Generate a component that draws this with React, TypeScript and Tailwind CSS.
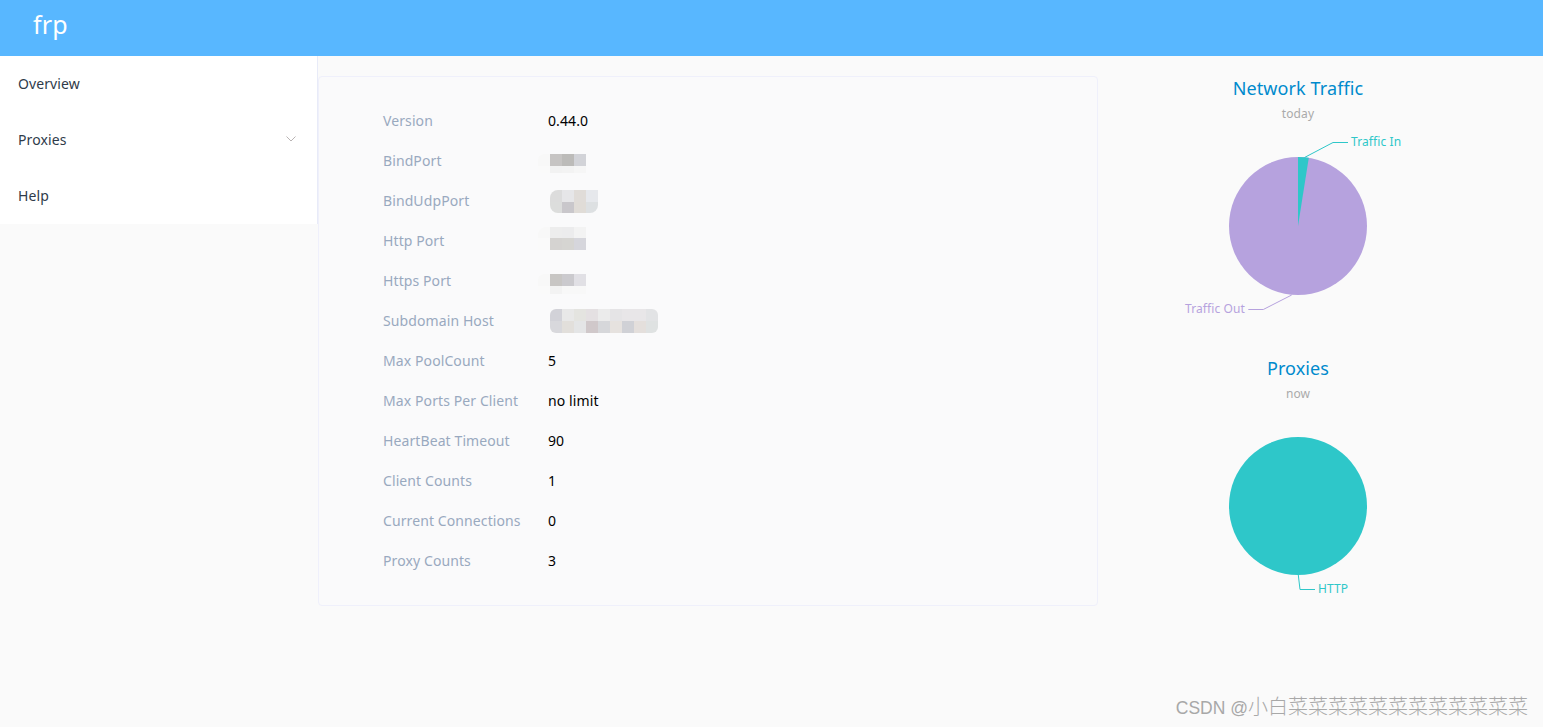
import React from 'react';

const font = "font-['Noto_Sans','Liberation_Sans',sans-serif]";

// pixelated values, each entry is a row of 12px cells
type Blur = { ml: string; mt: string; rounded: string; rows: { h: string; cells: string[] }[] };

const bindPort: Blur = {
  ml: 'ml-[-10px]',
  mt: 'mt-[5px]',
  rounded: 'rounded-l-md',
  rows: [
    { h: 'h-[12px]', cells: ['bg-[#f8f8f8]', 'bg-[#c6c4c3]', 'bg-[#bcbbb9]', 'bg-[#d2d3d8]'] },
    { h: 'h-[7px]', cells: ['bg-[#fafafa]', 'bg-[#f2f2f2]', 'bg-[#f3f3f3]', 'bg-[#f6f6f6]'] },
  ],
};

const bindUdp: Blur = {
  ml: 'ml-[2px]',
  mt: 'mt-0',
  rounded: 'rounded-l-lg rounded-br-lg',
  rows: [
    { h: 'h-[12px]', cells: ['bg-[#dcdcdc]', 'bg-[#e6e6e8]', 'bg-[#e0dcd8]', 'bg-[#e6e8ec]'] },
    { h: 'h-[11px]', cells: ['bg-[#dcdddc]', 'bg-[#c9c7cb]', 'bg-[#e0dcd7]', 'bg-[#dde0e2]'] },
  ],
};

const httpPort: Blur = {
  ml: 'ml-[-10px]',
  mt: 'mb-[5px]',
  rounded: 'rounded-tl-lg',
  rows: [
    { h: 'h-[11px]', cells: ['bg-[#f8f8f8]', 'bg-[#ededed]', 'bg-[#ececed]', 'bg-[#f3f3f3]'] },
    { h: 'h-[12px]', cells: ['bg-[#fafafa]', 'bg-[#d5d3d1]', 'bg-[#d6d5d2]', 'bg-[#d6d6dc]'] },
  ],
};

const httpsPort: Blur = {
  ml: 'ml-[-10px]',
  mt: 'mt-[6px]',
  rounded: 'rounded-l-md',
  rows: [
    { h: 'h-[12px]', cells: ['bg-[#f8f8f8]', 'bg-[#c8c6c4]', 'bg-[#cbcace]', 'bg-[#e1e0e5]'] },
    { h: 'h-[8px]', cells: ['bg-[#fafafa]', 'bg-[#f3f3f3]', 'bg-[#f8f8f8]', 'bg-[#f8f8f8]'] },
  ],
};

const subdomain: Blur = {
  ml: 'ml-[2px]',
  mt: 'mt-0',
  rounded: 'rounded-md',
  rows: [
    {
      h: 'h-[12px]',
      cells: ['bg-[#d2d2d8]', 'bg-[#e8e8e8]', 'bg-[#e4e4e0]', 'bg-[#e4e0e2]', 'bg-[#ebebeb]', 'bg-[#e5e4e6]', 'bg-[#e8e6e8]', 'bg-[#e8e6e8]', 'bg-[#e2e3e5]'],
    },
    {
      h: 'h-[12px]',
      cells: ['bg-[#d8d8dc]', 'bg-[#e2dfdb]', 'bg-[#e4e5e6]', 'bg-[#d0c8ca]', 'bg-[#d6d7da]', 'bg-[#e6e2df]', 'bg-[#d0d1d6]', 'bg-[#e4dfdc]', 'bg-[#dfe2e2]'],
    },
  ],
};

const rows: { label: string; value?: string; blur?: Blur }[] = [
  { label: 'Version', value: '0.44.0' },
  { label: 'BindPort', blur: bindPort },
  { label: 'BindUdpPort', blur: bindUdp },
  { label: 'Http Port', blur: httpPort },
  { label: 'Https Port', blur: httpsPort },
  { label: 'Subdomain Host', blur: subdomain },
  { label: 'Max PoolCount', value: '5' },
  { label: 'Max Ports Per Client', value: 'no limit' },
  { label: 'HeartBeat Timeout', value: '90' },
  { label: 'Client Counts', value: '1' },
  { label: 'Current Connections', value: '0' },
  { label: 'Proxy Counts', value: '3' },
];

const Mosaic = ({ blur }: { blur: Blur }) => (
  <div className={`${blur.ml} ${blur.mt} ${blur.rounded} flex flex-col overflow-hidden`}>
    {blur.rows.map((r, i) => (
      <div key={i} className="flex">
        {r.cells.map((c, j) => (
          <div key={j} className={`w-[12px] ${r.h} ${c}`} />
        ))}
      </div>
    ))}
  </div>
);

const MenuItem = ({ label, arrow }: { label: string; arrow?: boolean }) => (
  <div className="flex h-14 items-center justify-between pl-[18px] pr-[21px] text-sm text-[#2f3b4a]">
    <span>{label}</span>
    {arrow && (
      <svg width="10" height="6" viewBox="0 0 10 6" fill="none" className="-mt-0.5">
        <path d="M0.5 0.5L5 5L9.5 0.5" stroke="#b9b4b4" strokeWidth="1" />
      </svg>
    )}
  </div>
);

const ChartTitle = ({ title, sub }: { title: string; sub: string }) => (
  <div className="flex flex-col items-center">
    <div className="h-[25px] text-[18px] leading-[25px] text-[#008acd]">{title}</div>
    <div className="mt-[5px] h-[16px] text-xs leading-[16px] text-[#aaaaaa]">{sub}</div>
  </div>
);

const App = () => {
  return (
    <div className={`${font} relative flex h-[727px] flex-col overflow-hidden bg-[#fafafa] tracking-[0.1px]`}>
      <header className="flex h-14 shrink-0 items-start bg-[#58b7ff] pl-[33px] text-[25px] leading-[48px] text-white">
        frp
      </header>

      <div className="flex flex-1">
        <aside className="h-[168px] w-[318px] shrink-0 border-r border-[#e8ebf8] bg-white">
          <MenuItem label="Overview" />
          <MenuItem label="Proxies" arrow />
          <MenuItem label="Help" />
        </aside>

        <main className="flex items-start pt-5">
          <div className="h-[530px] w-[780px] rounded border border-[#eff0fb] bg-[#fafafb] pl-[64px] pt-[24px]">
            {rows.map((r) => (
              <div key={r.label} className="flex h-10 items-center text-sm">
                <div className="w-[165px] shrink-0 text-[#99a9bf]">{r.label}</div>
                {r.blur ? <Mosaic blur={r.blur} /> : <div className="text-black">{r.value}</div>}
              </div>
            ))}
          </div>

          <div className="flex w-[400px] flex-col">
            <div className="h-[280px]">
              <ChartTitle title="Network Traffic" sub="today" />
              <svg width="400" height="234" viewBox="0 0 400 234" className="-mt-[1px]">
                <g transform="translate(0 -121)">
                  <circle cx="200" cy="226" r="69" fill="#b6a2de" />
                  <path d="M200 226L200 157A69 69 0 0 1 210.8 157.8Z" fill="#2ec7c9" />
                  <path d="M206.5 157.5L235 142.5H250" fill="none" stroke="#2ec7c9" />
                  <path d="M193.7 295L165.3 309.5H150.3" fill="none" stroke="#b6a2de" />
                  <text x="253" y="146" fontSize="12" fill="#2ec7c9">Traffic In</text>
                  <text x="147" y="313" fontSize="12" fill="#b6a2de" textAnchor="end">Traffic Out</text>
                </g>
              </svg>
            </div>
            <div className="h-[280px]">
              <ChartTitle title="Proxies" sub="now" />
              <svg width="400" height="234" viewBox="0 0 400 234" className="-mt-[1px]">
                <g transform="translate(0 -401)">
                  <circle cx="200" cy="506" r="69" fill="#2ec7c9" />
                  <path d="M200.3 575L202 589.5H217" fill="none" stroke="#2ec7c9" />
                  <text x="220" y="593" fontSize="12" fill="#2ec7c9">HTTP</text>
                </g>
              </svg>
            </div>
          </div>
        </main>
      </div>

      <div className="absolute bottom-[6px] right-[15px] font-['Liberation_Sans','Noto_Sans_CJK_SC',sans-serif] text-[20px] font-light leading-[26px] tracking-normal text-[#a8a8a8]">
        <span className="text-[17.5px]">CSDN @</span>小白菜菜菜菜菜菜菜菜菜菜菜菜
      </div>
    </div>
  );
};

export default App;
